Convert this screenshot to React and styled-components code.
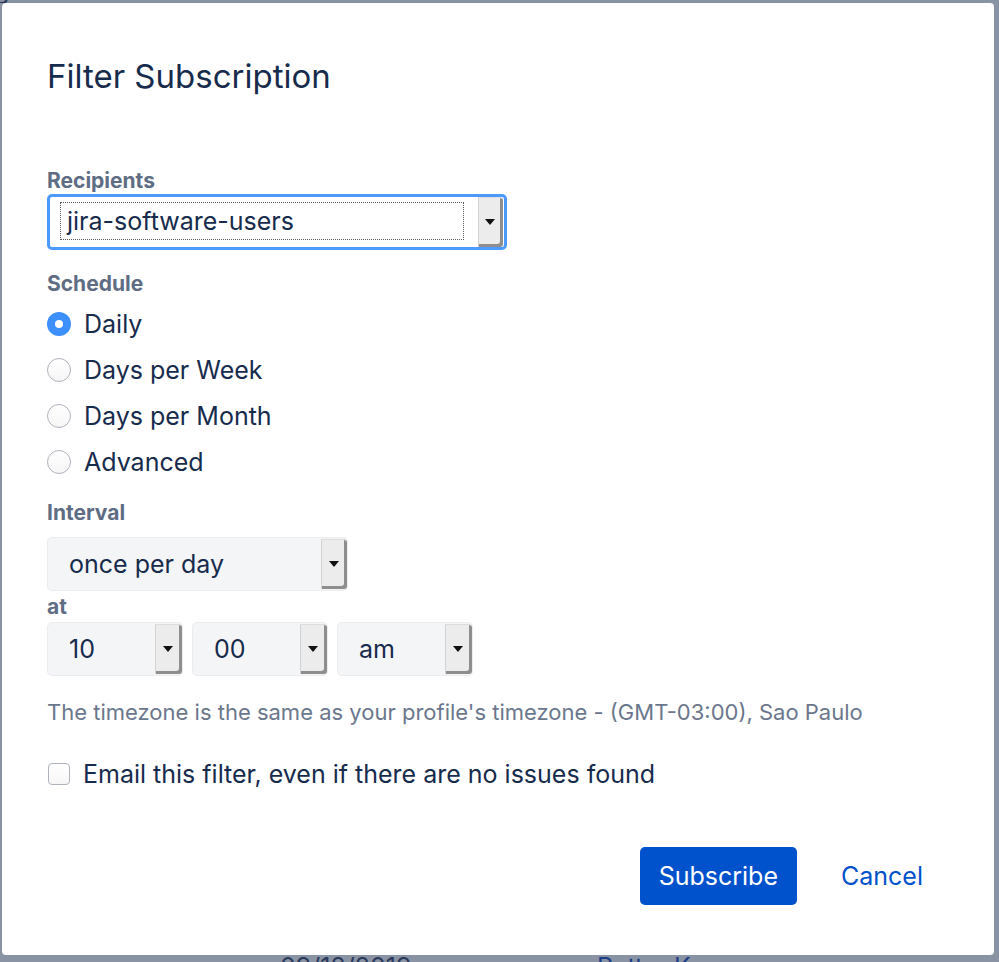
import React from "react"
import styled, { createGlobalStyle, css } from "styled-components"

const GlobalStyle = createGlobalStyle`
  html, body {
    margin: 0;
    padding: 0;
  }
  body {
    background: #8a93a4;
    font-family: Inter, "Liberation Sans", Arial, sans-serif;
    -webkit-font-smoothing: antialiased;
  }
`

const Page = styled.div`
  display: flex;
  flex-direction: column;
  height: 962px;
  padding: 0 5px 0 2px;
  box-sizing: border-box;
  overflow: hidden;
`

const BackdropStrip = styled.div`
  height: ${(p) => p.$height}px;
  overflow: hidden;
  display: flex;
  align-items: ${(p) => (p.$edge === "top" ? "flex-end" : "flex-start")};
  flex: none;
  margin: 0 -5px 0 -2px;
`

const BackdropRow = styled.div`
  display: grid;
  grid-template-columns: ${(p) => p.$columns};
  font-size: 25px;
  line-height: 25px;
  white-space: nowrap;
  flex: none;
`

const BackText = styled.span`
  color: ${(p) => (p.$link ? "#1d3f88" : "#2b3a5c")};
`

const Dialog = styled.div`
  flex: none;
  height: 952px;
  box-sizing: border-box;
  background: #fff;
  border-radius: 4px;
  padding: 53px 52px 50px 45px;
  display: flex;
  flex-direction: column;
  color: #172b4d;
`

const Title = styled.h1`
  margin: 0;
  font-size: 33px;
  line-height: 40px;
  font-weight: 400;
  color: #172b4d;
`

const Label = styled.div`
  font-size: 21px;
  line-height: 24px;
  font-weight: 700;
  color: #5e6c84;
  margin-top: ${(p) => p.$top}px;
  margin-bottom: ${(p) => p.$bottom}px;
`

const SelectFrame = styled.div`
  display: flex;
  width: ${(p) => p.$width}px;
  height: ${(p) => (p.$focused ? 56 : 54)}px;
  box-sizing: border-box;
  border-radius: 5px;
  flex: none;
  ${(p) =>
    p.$focused
      ? css`
          background: #fff;
          border: 3px solid #4c9aff;
          padding: 0 1px 0 0;
        `
      : css`
          background: #f4f5f7;
          border: 1px solid #ebecf0;
          padding: 1px 0;
        `}
`

const SelectValue = styled.div`
  flex: 1;
  display: flex;
  align-items: center;
  font-size: 25px;
  color: #172b4d;
  ${(p) =>
    p.$focused
      ? css`
          margin: 6px 15px 8px 11px;
          padding-left: 6px;
          outline: 1px dotted #5a5a5a;
        `
      : css`
          padding-left: 21px;
        `}
`

const ArrowButton = styled.div`
  width: ${(p) => p.$width}px;
  flex: none;
  display: flex;
  align-items: center;
  justify-content: center;
  background: #ececec;
  border-left: 1px solid #d2d2d2;
  border-top: 1px solid #dcdcdc;
  box-shadow: inset -3px -3px 0 #8e8e8e;
  border-radius: 0 3px 3px 0;
  box-sizing: border-box;
  padding: 0 2px 2px 0;
`

const Caret = styled.span`
  width: 0;
  height: 0;
  border-left: 5px solid transparent;
  border-right: 5px solid transparent;
  border-top: 6px solid #111;
`

const TimeRow = styled.div`
  display: flex;
  gap: 9px;
  margin-top: 3px;
`

const RadioList = styled.div`
  display: flex;
  flex-direction: column;
  margin-top: 5px;
`

const OptionRow = styled.label`
  display: flex;
  align-items: center;
  height: 46px;
  gap: ${(p) => p.$gap}px;
  font-size: 25px;
  color: #172b4d;
  margin-top: ${(p) => p.$top || 0}px;
`

const Radio = styled.span`
  width: 24px;
  height: 24px;
  border-radius: 50%;
  box-sizing: border-box;
  flex: none;
  display: flex;
  align-items: center;
  justify-content: center;
  ${(p) =>
    p.$checked
      ? css`
          background: #3d8ffb;
          &::after {
            content: "";
            width: 8px;
            height: 8px;
            border-radius: 50%;
            background: #fff;
          }
        `
      : css`
          border: 1px solid #aeb3bc;
          background: linear-gradient(#fff, #f6f6f6);
        `}
`

const Checkbox = styled.span`
  width: 22px;
  height: 22px;
  margin-left: 1px;
  box-sizing: border-box;
  border: 1px solid #aeb3bc;
  border-radius: 4px;
  background: linear-gradient(#fff, #f6f6f6);
  flex: none;
`

const Hint = styled.div`
  margin-top: 24px;
  font-size: 22px;
  line-height: 24px;
  color: #6b778c;
`

const Footer = styled.div`
  display: flex;
  justify-content: flex-end;
  gap: 25px;
  margin-top: 51px;
`

const Button = styled.button`
  height: 58px;
  padding: 0 19px;
  border: none;
  border-radius: 5px;
  font-family: inherit;
  font-size: 25px;
  font-weight: 400;
  cursor: pointer;
  background: ${(p) => (p.$primary ? "#0052cc" : "transparent")};
  color: ${(p) => (p.$primary ? "#fff" : "#0052cc")};
`

const Select = ({ width, focused, arrow = 26, children }) => (
  <SelectFrame $width={width} $focused={focused}>
    <SelectValue $focused={focused}>{children}</SelectValue>
    <ArrowButton $width={arrow}>
      <Caret />
    </ArrowButton>
  </SelectFrame>
)

const schedules = ["Daily", "Days per Week", "Days per Month", "Advanced"]

const App = () => {
  return (
    <>
      <GlobalStyle />
      <Page>
        <BackdropStrip $height={3} $edge="top">
          <BackdropRow $columns="auto">
            <BackText style={{ marginLeft: -6 }}>gest Kanban : Scrum</BackText>
          </BackdropRow>
        </BackdropStrip>
        <Dialog>
          <Title>Filter Subscription</Title>
          <Label $top={73} $bottom={1}>
            Recipients
          </Label>
          <Select width={460} focused arrow={25}>
            jira-software-users
          </Select>
          <Label $top={22} $bottom={0}>
            Schedule
          </Label>
          <RadioList>
            {schedules.map((s, i) => (
              <OptionRow key={s} $gap={13}>
                <Radio $checked={i === 0} />
                {s}
              </OptionRow>
            ))}
          </RadioList>
          <Label $top={16} $bottom={12}>
            Interval
          </Label>
          <Select width={301}>once per day</Select>
          <Label $top={4} $bottom={0}>
            at
          </Label>
          <TimeRow>
            <Select width={136} arrow={27}>10</Select>
            <Select width={136} arrow={27}>00</Select>
            <Select width={136} arrow={27}>am</Select>
          </TimeRow>
          <Hint>
            The timezone is the same as your profile's timezone - (GMT-03:00), Sao Paulo
          </Hint>
          <OptionRow $gap={13} $top={27}>
            <Checkbox />
            Email this filter, even if there are no issues found
          </OptionRow>
          <Footer>
            <Button $primary>Subscribe</Button>
            <Button>Cancel</Button>
          </Footer>
        </Dialog>
        <BackdropStrip $height={7} $edge="bottom">
          <BackdropRow $columns="280px 317px auto">
            <BackText>um</BackText>
            <BackText>09/12/2019</BackText>
            <BackText $link>Petter Krumen</BackText>
          </BackdropRow>
        </BackdropStrip>
      </Page>
    </>
  )
}

export default App
